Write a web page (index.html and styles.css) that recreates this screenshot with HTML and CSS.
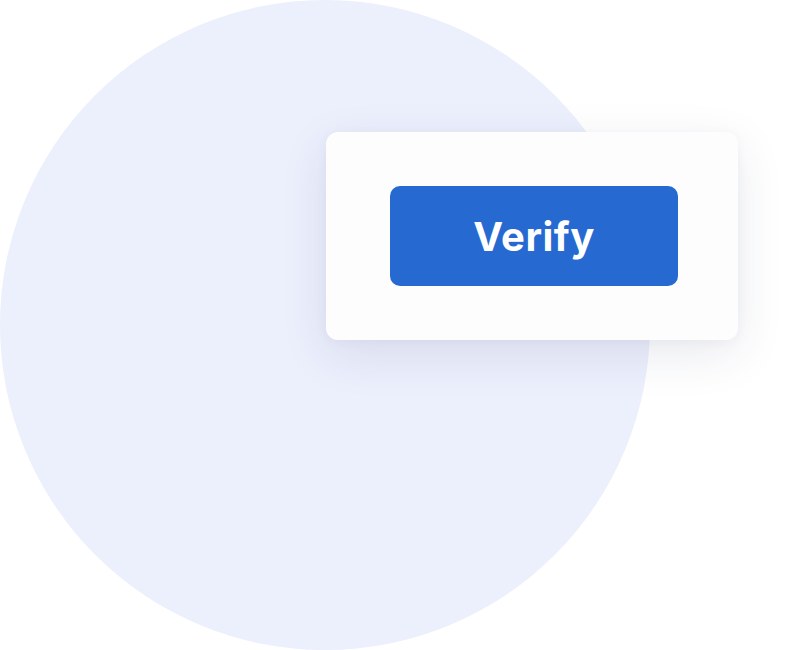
FILE: index.html
```html
<!DOCTYPE html>
<html lang="en">
<head>
<meta charset="utf-8">
<title>Verify</title>
<link rel="stylesheet" href="styles.css">
</head>
<body>
  <div class="stage">
    <div class="blob"></div>
    <div class="card">
      <button class="verify-btn" type="button">Verify</button>
    </div>
  </div>
</body>
</html>
```

FILE: styles.css
```css
html, body {
  margin: 0;
  padding: 0;
  background: #ffffff;
}

body {
  font-family: Inter, "Noto Sans", "Liberation Sans", sans-serif;
}

.stage {
  position: relative;
  width: 798px;
  height: 650px;
  overflow: hidden;
}

.blob {
  width: 650px;
  height: 650px;
  border-radius: 50%;
  background: #eceffc;
}

.card {
  position: absolute;
  left: 326px;
  top: 132px;
  width: 412px;
  height: 208px;
  box-sizing: border-box;
  background: #fdfdfe;
  border-radius: 12px;
  box-shadow: 0 14px 48px rgba(40, 50, 100, 0.10), 0 2px 12px rgba(40, 50, 100, 0.04);
  display: flex;
  justify-content: flex-start;
  padding: 54px 0 0 64px;
}

.verify-btn {
  width: 288px;
  height: 100px;
  border: none;
  border-radius: 10px;
  background: #2669d1;
  color: #ffffff;
  font-family: Inter, "Noto Sans", "Liberation Sans", sans-serif;
  font-weight: 700;
  font-size: 40px;
  letter-spacing: 0.5px;
  padding: 0;
  cursor: pointer;
}
```
